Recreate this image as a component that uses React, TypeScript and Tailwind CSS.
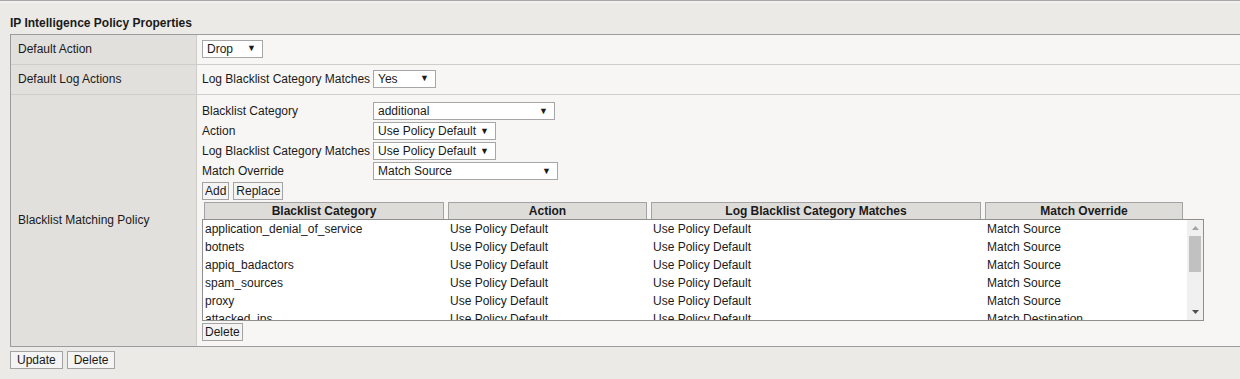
import React from 'react';

interface SelectProps {
  value: string;
  width: string;
}

// fake native select, the old-style box with a small black triangle
const Select: React.FC<SelectProps> = ({ value, width }) => (
  <div className={`flex h-[18px] items-center justify-between border border-[#a6a6a6] bg-white pl-[4px] pr-[6px] ${width}`}>
    <span className="leading-none">{value}</span>
    <span className="text-[9px] leading-none">▼</span>
  </div>
);

// small in-form buttons have almost no side padding, the page ones have more
const Button: React.FC<{ label: string; wide?: boolean }> = ({ label, wide }) => (
  <button
    className={`flex h-[18px] items-center border border-[#a3a3a3] bg-[#f4f4f4] leading-none text-[#1a1a1a] ${
      wide ? 'px-[6px]' : 'px-[2px]'
    }`}
  >
    {label}
  </button>
);

const rows = [
  ['application_denial_of_service', 'Use Policy Default', 'Use Policy Default', 'Match Source'],
  ['botnets', 'Use Policy Default', 'Use Policy Default', 'Match Source'],
  ['appiq_badactors', 'Use Policy Default', 'Use Policy Default', 'Match Source'],
  ['spam_sources', 'Use Policy Default', 'Use Policy Default', 'Match Source'],
  ['proxy', 'Use Policy Default', 'Use Policy Default', 'Match Source'],
  ['attacked_ips', 'Use Policy Default', 'Use Policy Default', 'Match Destination'],
];

const FieldRow: React.FC<{ label: string; children: React.ReactNode }> = ({ label, children }) => (
  <div className="flex h-[20px] items-center">
    <span className="w-[171px] shrink-0">{label}</span>
    {children}
  </div>
);

export default function App() {
  return (
    <div
      className="h-[379px] w-[1240px] overflow-hidden bg-[#ebeae6] text-[12px] text-[#1a1a1a]"
      style={{ fontFamily: '"Liberation Sans", Arial, sans-serif' }}
    >
      {/* strip left over from the section above */}
      <div className="h-[3px] border-t border-[#a8a8a8] bg-[#f1f0ee]" />

      <div className="pl-[10px]">
        <div className="flex h-[31px] items-end pb-[2px] font-bold">IP Intelligence Policy Properties</div>

        {/* properties table */}
        <div className="grid grid-cols-[186px_1fr] border-t border-b border-l border-[#9c9c9c]">
          <div className="flex h-[30px] items-center border-r border-b border-[#cfcdca] bg-[#e1e0dd] pb-[2px] pl-[7px]">Default Action</div>
          <div className="flex h-[30px] items-center border-b border-[#cfcdca] bg-[#f7f6f4] pb-[2px] pl-[5px]">
            <Select value="Drop" width="w-[61px]" />
          </div>

          <div className="flex h-[30px] items-center border-r border-b border-[#cfcdca] bg-[#e1e0dd] pb-[2px] pl-[7px]">Default Log Actions</div>
          <div className="flex h-[30px] items-center border-b border-[#cfcdca] bg-[#f7f6f4] pb-[2px] pl-[5px]">
            <span className="w-[171px]">Log Blacklist Category Matches</span>
            <Select value="Yes" width="w-[63px]" />
          </div>

          <div className="flex h-[251px] items-center border-r border-[#cfcdca] bg-[#e1e0dd] pb-[2px] pl-[7px]">Blacklist Matching Policy</div>
          <div className="flex h-[251px] flex-col bg-[#f7f6f4] pt-[6px] pl-[5px]">
            <FieldRow label="Blacklist Category">
              <Select value="additional" width="w-[182px]" />
            </FieldRow>
            <FieldRow label="Action">
              <Select value="Use Policy Default" width="w-[123px]" />
            </FieldRow>
            <FieldRow label="Log Blacklist Category Matches">
              <Select value="Use Policy Default" width="w-[123px]" />
            </FieldRow>
            <FieldRow label="Match Override">
              <Select value="Match Source" width="w-[185px]" />
            </FieldRow>

            <div className="mt-[1px] flex gap-[4px]">
              <Button label="Add" />
              <Button label="Replace" />
            </div>

            {/* list header */}
            <div className="mt-[2px] flex gap-[4px] pl-[2px] font-bold">
              <div className="flex h-[17px] w-[240px] items-center justify-center border border-b-0 border-[#a3a3a3] bg-[#dddcd9]">Blacklist Category</div>
              <div className="flex h-[17px] w-[199px] items-center justify-center border border-b-0 border-[#a3a3a3] bg-[#dddcd9]">Action</div>
              <div className="flex h-[17px] w-[330px] items-center justify-center border border-b-0 border-[#a3a3a3] bg-[#dddcd9]">Log Blacklist Category Matches</div>
              <div className="flex h-[17px] w-[198px] items-center justify-center border border-b-0 border-[#a3a3a3] bg-[#dddcd9]">Match Override</div>
            </div>

            {/* list box */}
            <div className="flex h-[102px] w-[1002px] border border-[#8f8f8f] bg-white">
              <div className="flex-1 overflow-hidden">
                {rows.map(r => (
                  <div key={r[0]} className="grid h-[18px] grid-cols-[245px_203px_334px_1fr] items-center pl-[2px]">
                    {r.map((c, i) => (
                      <span key={i} className="whitespace-nowrap">{c}</span>
                    ))}
                  </div>
                ))}
              </div>
              <div className="flex w-[16px] flex-col items-center bg-[#f0f0f0]">
                <div className="flex h-[16px] items-center">
                  <svg width="7" height="4" viewBox="0 0 7 4"><path d="M0 4 L3.5 0 L7 4 Z" fill="#a3a3a3" /></svg>
                </div>
                <div className="h-[36px] w-[12px] bg-[#c1c1c1]" />
                <div className="flex-1" />
                <div className="flex h-[16px] items-center">
                  <svg width="7" height="4" viewBox="0 0 7 4"><path d="M0 0 L7 0 L3.5 4 Z" fill="#505050" /></svg>
                </div>
              </div>
            </div>

            <div className="mt-[2px]">
              <Button label="Delete" />
            </div>
          </div>
        </div>

        <div className="mt-[4px] flex gap-[4px]">
          <Button label="Update" wide />
          <Button label="Delete" wide />
        </div>
      </div>
    </div>
  );
}
